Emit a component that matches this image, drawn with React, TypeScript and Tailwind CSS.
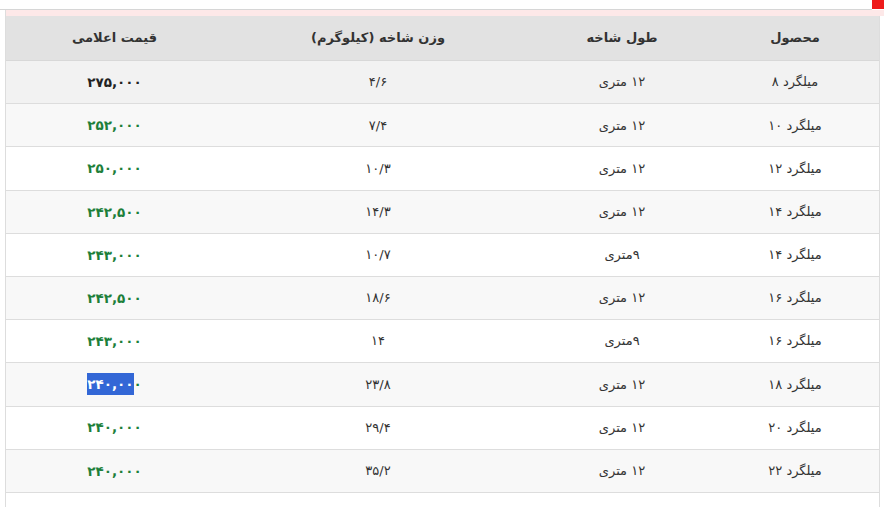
import React from "react";

interface Row {
  product: string;
  length: string;
  weight: string;
  price: string;
}

const rows: Row[] = [
  { product: "میلگرد ۸", length: "۱۲ متری", weight: "۴/۶", price: "۲۷۵,۰۰۰" },
  { product: "میلگرد ۱۰", length: "۱۲ متری", weight: "۷/۴", price: "۲۵۲,۰۰۰" },
  { product: "میلگرد ۱۲", length: "۱۲ متری", weight: "۱۰/۳", price: "۲۵۰,۰۰۰" },
  { product: "میلگرد ۱۴", length: "۱۲ متری", weight: "۱۴/۳", price: "۲۴۲,۵۰۰" },
  { product: "میلگرد ۱۴", length: "۹متری", weight: "۱۰/۷", price: "۲۴۳,۰۰۰" },
  { product: "میلگرد ۱۶", length: "۱۲ متری", weight: "۱۸/۶", price: "۲۴۲,۵۰۰" },
  { product: "میلگرد ۱۶", length: "۹متری", weight: "۱۴", price: "۲۴۳,۰۰۰" },
  { product: "میلگرد ۱۸", length: "۱۲ متری", weight: "۲۳/۸", price: "۲۴۰,۰۰۰" },
  { product: "میلگرد ۲۰", length: "۱۲ متری", weight: "۲۹/۴", price: "۲۴۰,۰۰۰" },
  { product: "میلگرد ۲۲", length: "۱۲ متری", weight: "۳۵/۲", price: "۲۴۰,۰۰۰" },
];

function rowBg(index: number) {
  if (index === 0) return "bg-[#f2f2f2]";
  return index % 2 === 1 ? "bg-[#f8f8f8]" : "bg-white";
}

export default function App() {
  return (
    <div className="w-[884px] h-[507px] bg-white overflow-hidden font-['DejaVu_Sans',sans-serif] text-[#333]">
      {/* top strip */}
      <div className="flex h-[10px]">
        <div className="flex-1 border-b border-[#d6d6d6]" />
        <div className="w-3 h-[9px] bg-[#ee1b1b]" />
      </div>

      <div className="ml-[5px] h-[497px] border-l border-[#dddddd] flex flex-col">
        <div className="h-[6px] bg-[#fde8e8]" />

        <div dir="rtl" className="w-[874px] flex-1 border-r border-[#dddddd]">
          {/* header */}
          <div className="flex h-[45px] items-center bg-[#e2e2e2] border-b border-[#d8d8d8] text-[13px] font-bold text-[#333]">
            <div className="w-[168px] text-center">محصول</div>
            <div className="w-[178px] text-center">طول شاخه</div>
            <div className="w-[310px] text-center">وزن شاخه (کیلوگرم)</div>
            <div className="flex-1 text-center">قیمت اعلامی</div>
          </div>

          {rows.map((row, index) => (
            <div
              key={index}
              className={`flex h-[43.2px] items-center border-b border-[#dddddd] text-[13px] ${rowBg(index)}`}
            >
              <div className="w-[168px] text-center">{row.product}</div>
              <div className="w-[178px] text-center">{row.length}</div>
              <div className="w-[310px] text-center">{row.weight}</div>
              <div
                className={`flex-1 text-center font-bold text-[13.5px] ${
                  index === 0 ? "text-[#222]" : "text-[#1d7f3a]"
                }`}
              >
                {index === 7 ? (
                  <span dir="ltr">
                    <span className="bg-[#3367d6] text-white py-[3px]">۲۴۰,۰۰</span>
                    ۰
                  </span>
                ) : (
                  row.price
                )}
              </div>
            </div>
          ))}
        </div>
      </div>
    </div>
  );
}
